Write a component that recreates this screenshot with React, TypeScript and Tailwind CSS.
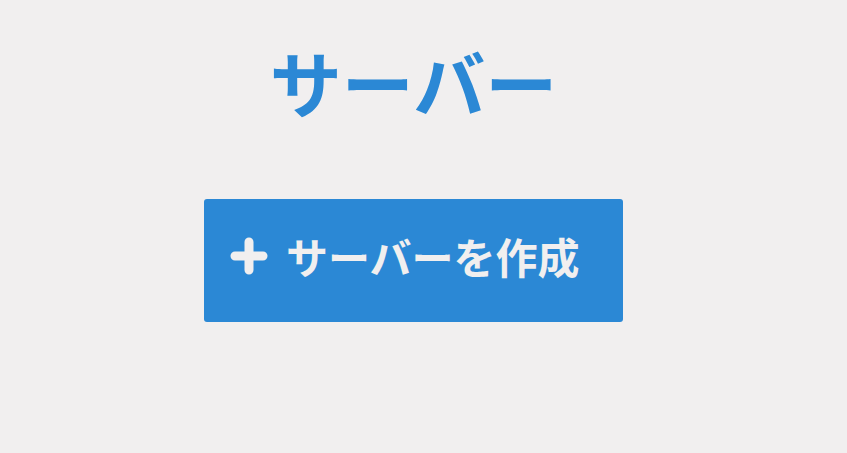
export default function App() {
  return (
    <div
      className="min-h-[453px] w-full bg-[#f1efef] pr-[20px]"
      style={{ fontFamily: '"Noto Sans CJK JP", "Noto Sans", sans-serif' }}
    >
      <div className="flex flex-col items-center pt-[31px]">
        <h1 className="text-[72px] font-bold leading-[100px] text-[#2b88d5]">サーバー</h1>
        <button className="mt-[68px] flex h-[123px] w-[419px] items-center gap-[18px] rounded-[3px] bg-[#2b88d5] pb-[10px] pl-[26px] text-[#f1efef]">
          <svg width="38" height="38" viewBox="0 0 38 38" fill="none" stroke="currentColor" strokeWidth="9" strokeLinecap="round" className="shrink-0">
            <path d="M19 5v28M5 19h28" />
          </svg>
          <span className="text-[42px] font-bold leading-none">サーバーを作成</span>
        </button>
      </div>
    </div>
  );
}
